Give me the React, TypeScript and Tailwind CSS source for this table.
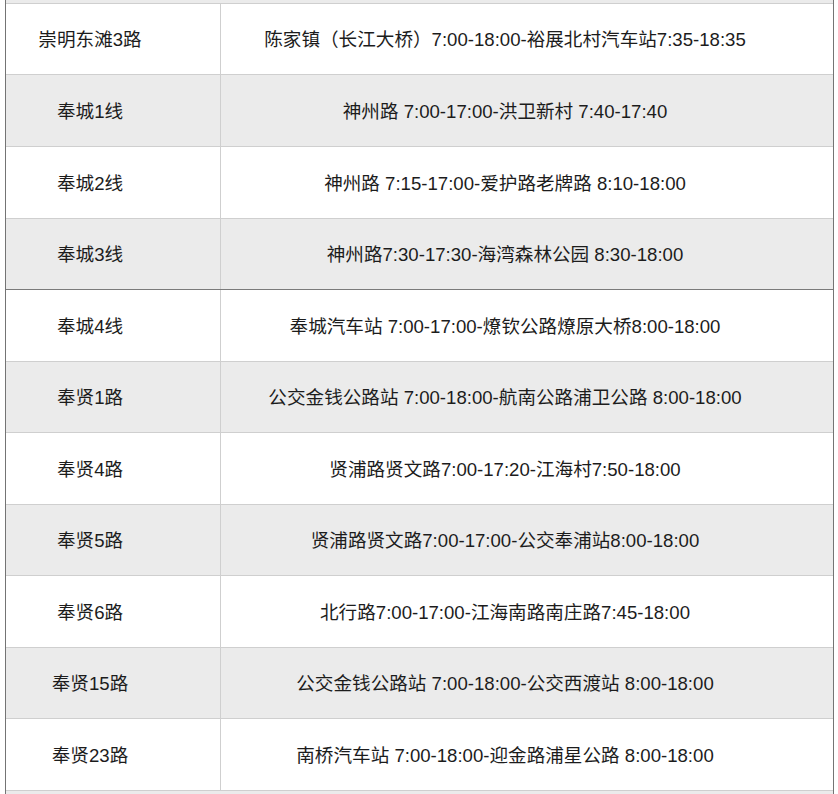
import React from "react";

type Row = { name: string; route: string; h: string };

const rows: Row[] = [
  { name: "崇明东滩3路", route: "陈家镇（长江大桥）7:00-18:00-裕展北村汽车站7:35-18:35", h: "h-[71px]" },
  { name: "奉城1线", route: "神州路 7:00-17:00-洪卫新村 7:40-17:40", h: "h-[72px]" },
  { name: "奉城2线", route: "神州路 7:15-17:00-爱护路老牌路 8:10-18:00", h: "h-[72px]" },
  { name: "奉城3线", route: "神州路7:30-17:30-海湾森林公园 8:30-18:00", h: "h-[71px]" },
  { name: "奉城4线", route: "奉城汽车站 7:00-17:00-燎钦公路燎原大桥8:00-18:00", h: "h-[72px]" },
  { name: "奉贤1路", route: "公交金钱公路站 7:00-18:00-航南公路浦卫公路 8:00-18:00", h: "h-[71px]" },
  { name: "奉贤4路", route: "贤浦路贤文路7:00-17:20-江海村7:50-18:00", h: "h-[72px]" },
  { name: "奉贤5路", route: "贤浦路贤文路7:00-17:00-公交奉浦站8:00-18:00", h: "h-[71px]" },
  { name: "奉贤6路", route: "北行路7:00-17:00-江海南路南庄路7:45-18:00", h: "h-[72px]" },
  { name: "奉贤15路", route: "公交金钱公路站 7:00-18:00-公交西渡站 8:00-18:00", h: "h-[71px]" },
  { name: "奉贤23路", route: "南桥汽车站 7:00-18:00-迎金路浦星公路 8:00-18:00", h: "h-[72px]" },
];

export default function App() {
  return (
    <div
      className="w-[838px] h-[794px] overflow-hidden bg-white"
      style={{ fontFamily: '"Liberation Sans", "Noto Sans CJK SC", sans-serif' }}
    >
      <div className="ml-[5px] w-[829px] border-x border-x-[#747474] text-[18.6px] text-[#1c1c1c]">
        <div className="h-[3px] bg-[#ebebeb]" />
        {rows.map((r, i) => (
          <div
            key={r.name}
            className={
              "grid grid-cols-[215px_1fr] border-t " +
              r.h +
              (i === 4 ? " border-t-[#7a7a7a]" : " border-t-[#cfcfcf]") +
              (i % 2 === 1 ? " bg-[#ebebeb]" : " bg-white")
            }
          >
            <div className="flex items-center justify-center pr-[46px] pt-[2px] border-r border-r-[#cfcfcf] whitespace-nowrap">
              {r.name}
            </div>
            <div className="flex items-center justify-center pr-[44px] pt-[2px] whitespace-nowrap">{r.route}</div>
          </div>
        ))}
        <div className="h-[10px] bg-[#ebebeb] border-t border-t-[#cfcfcf]" />
      </div>
    </div>
  );
}
